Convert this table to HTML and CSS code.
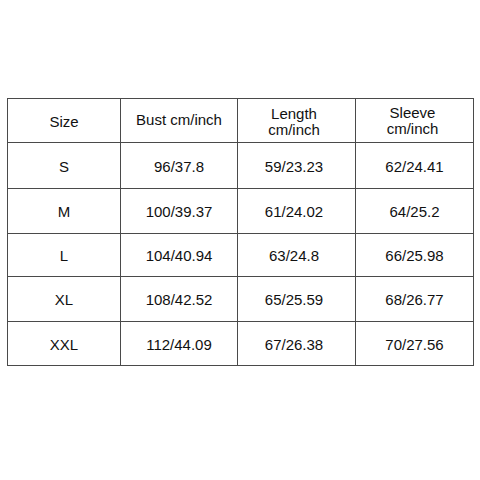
FILE: index.html
```html
<!DOCTYPE html>
<html>
<head>
<meta charset="utf-8">
<link rel="stylesheet" href="styles.css">
</head>
<body>
<table class="size-table">
  <colgroup>
    <col class="c1"><col class="c2"><col class="c3"><col class="c4">
  </colgroup>
  <tr class="r-head">
    <td>Size</td>
    <td class="up">Bust cm/inch</td>
    <td class="len">Length<br>cm/inch</td>
    <td class="slv">Sleeve<br>cm/inch</td>
  </tr>
  <tr class="r1"><td>S</td><td>96/37.8</td><td class="len">59/23.23</td><td>62/24.41</td></tr>
  <tr class="r2"><td>M</td><td>100/39.37</td><td class="len">61/24.02</td><td>64/25.2</td></tr>
  <tr class="r3"><td>L</td><td>104/40.94</td><td class="len">63/24.8</td><td>66/25.98</td></tr>
  <tr class="r4"><td>XL</td><td>108/42.52</td><td class="len">65/25.59</td><td>68/26.77</td></tr>
  <tr class="r5"><td>XXL</td><td>112/44.09</td><td class="len">67/26.38</td><td>70/27.56</td></tr>
</table>
</body>
</html>
```
FILE: styles.css
```css
html, body {
  margin: 0;
  padding: 0;
  background: #ffffff;
}
body {
  font-family: "Liberation Sans", Arial, sans-serif;
  color: #111111;
  font-size: 15px;
}
.size-table {
  margin-top: 98px;
  margin-left: 7px;
  width: 466px;
  border-collapse: collapse;
  table-layout: fixed;
}
.c1 { width: 113px; }
.c2 { width: 117px; }
.c3 { width: 118px; }
.c4 { width: 118px; }
.size-table td {
  border: 1.5px solid #4a4a4a;
  text-align: center;
  vertical-align: middle;
  padding: 2px 0 0 0;
  line-height: 16px;
}
.size-table .len { padding-right: 5px; }
.size-table .up { padding-bottom: 4px; }
.size-table .slv { padding-bottom: 2px; padding-right: 4px; }
.r-head { height: 44px; }
.r1 { height: 46px; }
.r2 { height: 45px; }
.r3 { height: 43px; }
.r4 { height: 45px; }
.r5 { height: 44px; }
```
